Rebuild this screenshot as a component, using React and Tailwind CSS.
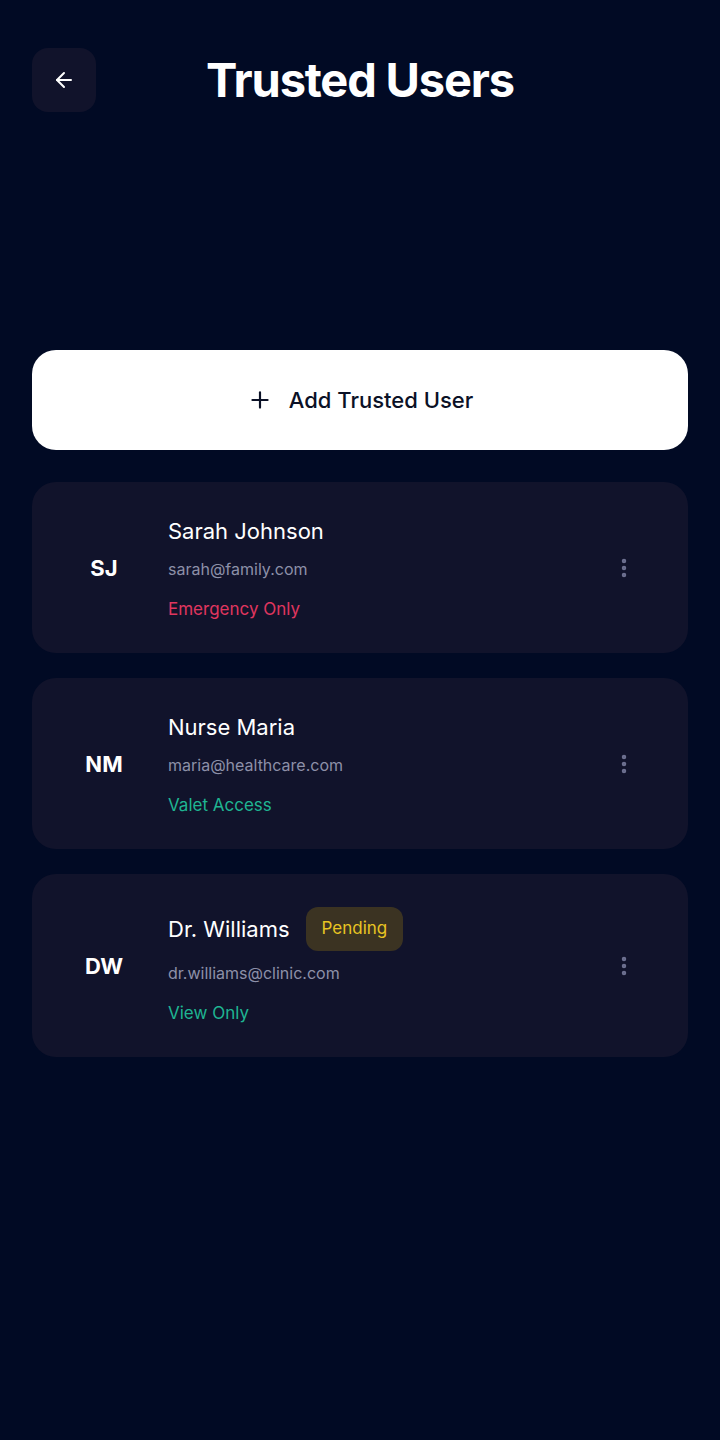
import { ArrowLeft, Plus, EllipsisVertical } from 'lucide-react';

const USERS = [
  {
    initials: 'SJ',
    name: 'Sarah Johnson',
    email: 'sarah@family.com',
    access: 'Emergency Only',
    accessColor: 'text-[#e0365f]',
  },
  {
    initials: 'NM',
    name: 'Nurse Maria',
    email: 'maria@healthcare.com',
    access: 'Valet Access',
    accessColor: 'text-[#1fb592]',
  },
  {
    initials: 'DW',
    name: 'Dr. Williams',
    email: 'dr.williams@clinic.com',
    access: 'View Only',
    accessColor: 'text-[#1fb592]',
    pending: true,
  },
];

function UserCard({ user }) {
  return (
    <div className="flex items-center rounded-[24px] bg-[#11132b] pb-8 pl-10 pr-10 pt-[33px]">
      <div className="flex w-16 shrink-0 justify-center text-[22px] font-bold text-white">
        {user.initials}
      </div>
      <div className="ml-8 flex flex-1 flex-col">
        <div className="flex items-center gap-4">
          <span className="text-[22px] leading-8 text-white">{user.name}</span>
          {user.pending && (
            <span className="flex h-11 items-center rounded-xl bg-[#3b3322] px-4 text-[17px] text-[#e8c422]">
              Pending
            </span>
          )}
        </div>
        <div className="mt-2.5 text-[16px] leading-6 text-[#8d90a8]">{user.email}</div>
        <div className={`mt-4 text-[17px] leading-6 ${user.accessColor}`}>{user.access}</div>
      </div>
      <button className="flex h-12 w-12 items-center justify-center text-[#6d7090]">
        <EllipsisVertical size={24} strokeWidth={2.5} />
      </button>
    </div>
  );
}

export default function App() {
  return (
    <div
      className="min-h-[1440px] bg-[#010a24] px-8 pt-12"
      style={{ fontFamily: 'Inter, "Noto Sans", sans-serif' }}
    >
      <div className="relative flex h-16 items-center justify-center">
        <button className="absolute left-0 top-0 flex h-16 w-16 items-center justify-center rounded-2xl bg-[#11132b] text-white">
          <ArrowLeft size={24} strokeWidth={2} />
        </button>
        <h1 className="text-[47px] font-bold tracking-tight text-white">Trusted Users</h1>
      </div>

      <button className="mt-[238px] flex h-[100px] w-full items-center justify-center gap-4 rounded-[24px] bg-white text-[22px] font-medium text-[#0b1126]">
        <Plus size={26} strokeWidth={2} />
        <span>Add Trusted User</span>
      </button>

      <div className="mt-8 flex flex-col gap-[25px]">
        {USERS.map((u) => (
          <UserCard key={u.initials} user={u} />
        ))}
      </div>
    </div>
  );
}
